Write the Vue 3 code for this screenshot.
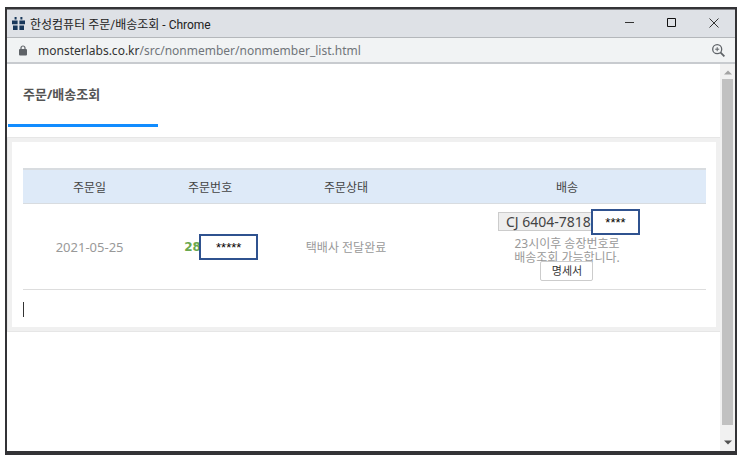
<template>
  <div class="window">
    <header class="title-bar">
      <svg class="favicon" viewBox="0 0 13 13" aria-hidden="true">
        <path
          d="M0 3.5h5.6v3.8H0zM7.4 3.5H13v3.8H7.4zM1 8.5h4.6V13H1zM7.4 8.5H12V13H7.4z"
          fill="#17375a"
        />
        <path d="M2.6 0h2v2.4h-2zM8.4 0h2v2.4h-2z" fill="#17375a" />
      </svg>
      <span class="title">한성컴퓨터 주문/배송조회 - Chrome</span>
      <div class="window-buttons">
        <button type="button" aria-label="최소화">
          <svg viewBox="0 0 10 10"><path d="M0 4.5h9" stroke="#333" /></svg>
        </button>
        <button type="button" aria-label="최대화">
          <svg viewBox="0 0 10 10">
            <path d="M.5 .5h8v8h-8z" fill="none" stroke="#111" />
          </svg>
        </button>
        <button type="button" aria-label="닫기">
          <svg viewBox="0 0 10 10"><path d="M.5 .5l9 9M9.5 .5l-9 9" stroke="#333" /></svg>
        </button>
      </div>
    </header>

    <div class="address-bar">
      <svg class="lock" viewBox="0 0 8 11" aria-hidden="true">
        <path d="M2 5V3a2 2 0 0 1 4 0v2" fill="none" stroke="#5f6368" stroke-width="1.2" />
        <rect y="4" width="8" height="6.5" rx="1" fill="#5f6368" />
      </svg>
      <p class="url"><span>monsterlabs.co.kr</span>/src/nonmember/nonmember_list.html</p>
      <button type="button" class="zoom" aria-label="확대/축소">
        <svg viewBox="0 0 13 13" fill="none" stroke="#5f6368">
          <circle cx="5.2" cy="5.2" r="4.5" stroke-width="1.3" />
          <path d="M3.2 5.2h4M5.2 3.2v4" />
          <path d="M8.4 8.4l4 4" stroke-width="1.8" />
        </svg>
      </button>
    </div>

    <div class="viewport">
      <main class="page">
        <h1>주문/배송조회</h1>
        <section class="panel">
          <table>
            <colgroup>
              <col class="col-date" />
              <col class="col-number" />
              <col class="col-status" />
              <col />
            </colgroup>
            <thead>
              <tr>
                <th v-for="name in columns" :key="name" scope="col">{{ name }}</th>
              </tr>
            </thead>
            <tbody>
              <tr v-for="order in orders" :key="order.date">
                <td class="date">{{ order.date }}</td>
                <td>
                  <div class="order-number">
                    <a href="#">{{ order.number }}</a>
                    <span class="mask mask-number">*****</span>
                  </div>
                </td>
                <td>{{ order.status }}</td>
                <td>
                  <div class="delivery">
                    <div class="tracking-row">
                      <button type="button" class="tracking">{{ order.tracking }}</button>
                      <span class="mask mask-tracking">****</span>
                    </div>
                    <p>23시이후 송장번호로<br />배송조회 가능합니다.</p>
                    <button type="button" class="statement">명세서</button>
                  </div>
                </td>
              </tr>
            </tbody>
          </table>
          <div class="caret"></div>
        </section>
      </main>

      <div class="scrollbar">
        <svg viewBox="0 0 8 5"><path d="M0 4.5L4 .5l4 4z" fill="#a3a3a3" /></svg>
        <div class="thumb"></div>
        <svg viewBox="0 0 8 5"><path d="M0 .5h8l-4 4z" fill="#505050" /></svg>
      </div>
    </div>
  </div>
</template>

<script setup>
const columns = ["주문일", "주문번호", "주문상태", "배송"];

const orders = [
  {
    date: "2021-05-25",
    number: "28",
    status: "택배사 전달완료",
    tracking: "CJ 6404-7818",
  },
];
</script>

<style>
body {
  margin: 0;
  background: #fff;
}
</style>

<style scoped>
.window {
  display: flex;
  flex-direction: column;
  height: calc(100vh - 16px);
  margin: 7px 9px 9px 5px;
  box-sizing: border-box;
  border: 2px solid #333336;
  border-bottom-width: 4px;
  background: #fff;
  color: #444;
  font-family: "Noto Sans", "Noto Sans CJK KR", sans-serif;
  font-size: 12px;
}

button {
  padding: 0;
  border: none;
  background: none;
  font-family: inherit;
  cursor: pointer;
}

svg {
  display: block;
}

.title-bar {
  display: flex;
  align-items: center;
  height: 29px;
  box-sizing: border-box;
  padding: 0 16px 1px 5px;
  border-top: 1px solid #85868a;
  border-bottom: 1px solid #b4b7bb;
  background: #dee1e6;
}

.favicon {
  width: 13px;
  height: 13px;
}

.title {
  flex: 1;
  margin-left: 5px;
  color: #222;
  font-family: Roboto, "Noto Sans CJK KR", sans-serif;
}

.window-buttons {
  display: flex;
  gap: 32px;
}

.window-buttons svg {
  width: 10px;
  height: 10px;
}

.address-bar {
  display: flex;
  align-items: center;
  height: 26px;
  box-sizing: border-box;
  padding: 0 10px 0 12px;
  border-bottom: 2px solid #c8cbcf;
  background: #f1f3f4;
}

.lock {
  width: 8px;
  height: 11px;
}

.url {
  flex: 1;
  margin: 0 0 0 11px;
  color: #70757a;
}

.url span {
  color: #333;
}

.zoom svg {
  width: 13px;
  height: 13px;
}

.viewport {
  display: flex;
  flex: 1;
  min-height: 0;
}

.page {
  flex: 1;
  overflow: hidden;
}

h1 {
  width: 150px;
  height: 63px;
  margin: 0 0 11px 1px;
  box-sizing: border-box;
  padding: 20px 0 0 15px;
  border-bottom: 3px solid #118cff;
  color: #555;
  font-size: 13px;
  line-height: 20px;
}

.panel {
  margin-left: 1px;
  padding: 26px 10px 10px 11px;
  border: 4px solid #f0f0f0;
  outline: 1px solid #e6e6e6;
}

table {
  width: 100%;
  border-collapse: collapse;
  table-layout: fixed;
  border-bottom: 1px solid #ddd;
}

.col-date {
  width: 19.5%;
}

.col-number {
  width: 15.8%;
}

.col-status {
  width: 24%;
}

th {
  height: 33px;
  padding: 0;
  border-top: 2px solid #d8dce0;
  border-bottom: 1px solid #d8dce0;
  background: #deeaf8;
  font-weight: normal;
}

td {
  height: 85px;
  padding: 0;
  color: #999;
  text-align: center;
}

.date {
  font-size: 13px;
}

.order-number,
.tracking-row {
  position: relative;
}

.order-number {
  padding-left: 28px;
  text-align: left;
}

.order-number a {
  color: #6aa84f;
  font-family: "DejaVu Sans", sans-serif;
  font-weight: bold;
  text-decoration: none;
}

.mask {
  position: absolute;
  display: flex;
  align-items: center;
  justify-content: center;
  height: 26px;
  box-sizing: border-box;
  border: 2px solid #2f528f;
  background: #fff;
  color: #000;
  font-family: "Liberation Sans", sans-serif;
  font-size: 13px;
}

.mask-number {
  top: -4px;
  left: 43px;
  width: 59px;
}

.mask-tracking {
  top: -3px;
  right: -4px;
  width: 49px;
}

.delivery {
  display: flex;
  flex-direction: column;
  align-items: center;
}

.tracking {
  display: block;
  width: 138px;
  height: 19px;
  padding-left: 7px;
  border: 1px solid #ccc;
  background: #eee;
  color: #444;
  font-size: 14px;
  line-height: 17px;
  text-align: left;
}

.delivery p {
  margin: 6px 0 0;
  line-height: 14px;
}

.statement {
  width: 53px;
  height: 20px;
  margin-top: -4px;
  border: 1px solid #ccc;
  border-radius: 2px;
  background: #fff;
  color: #333;
  font-size: 11px;
  line-height: 18px;
}

.caret {
  width: 1px;
  height: 15px;
  margin-top: 12px;
  background: #333;
}

.scrollbar {
  display: flex;
  flex-direction: column;
  align-items: center;
  justify-content: space-between;
  width: 15px;
  box-sizing: border-box;
  padding: 6px 0;
  background: #f1f1f1;
}

.scrollbar svg {
  width: 8px;
  height: 5px;
}

.thumb {
  flex: 1;
  width: 11px;
  margin: 4px 0 15px;
  background: #c1c1c1;
}
</style>
